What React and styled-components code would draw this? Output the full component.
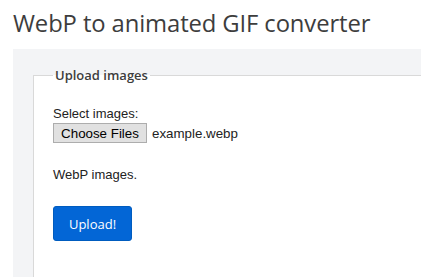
import React from "react";
import styled, { createGlobalStyle } from "styled-components";

const Global = createGlobalStyle`
  html, body { margin: 0; padding: 0; background: #fff; overflow: hidden; }
  body { font-family: "Liberation Sans", Arial, sans-serif; font-size: 13px; color: #222; }
`;

const Page = styled.div`
  box-sizing: border-box;
  height: 277px;
  padding: 0 0 0 13px;
  display: flex;
  flex-direction: column;
  overflow: hidden;
`;

const Title = styled.h1`
  margin: 0;
  padding-top: 6px;
  height: 43px;
  font-family: "Open Sans", "Noto Sans", sans-serif;
  font-weight: 400;
  font-size: 23.8px;
  line-height: 34px;
  color: #3d3d3d;
  letter-spacing: -0.1px;
  white-space: nowrap;
`;

const Panel = styled.section`
  flex: 1;
  min-height: 0;
  display: flex;
  flex-direction: column;
  background: #f3f4f6;
  padding: 17px 0 0 20px;
`;

const Fieldset = styled.fieldset`
  flex: 1;
  margin: 0;
  min-width: 0;
  background: #fff;
  border: 1px solid #d9d9d9;
  border-right: none;
  border-bottom: none;
  padding: 22px 0 0 19px;
`;

const Legend = styled.legend`
  padding: 0 2px;
  font-family: "Open Sans", "Noto Sans", sans-serif;
  font-weight: 600;
  font-size: 13px;
  line-height: 18px;
  color: #3d3d3d;
`;

const Label = styled.div`
  line-height: 15px;
  color: #222;
`;

const FileRow = styled.div`
  display: flex;
  align-items: center;
  gap: 5px;
  margin-top: 2px;
  height: 20px;
`;

const FileButton = styled.button`
  box-sizing: border-box;
  height: 20px;
  width: 94px;
  padding: 0;
  background: #e1e1e1;
  border: 1px solid #adadad;
  border-radius: 0;
  font-family: "Liberation Sans", Arial, sans-serif;
  font-size: 13.33px;
  color: #000;
`;

const FileName = styled.span`
  font-size: 13.33px;
  color: #222;
`;

const Hint = styled.p`
  margin: 24px 0 0;
  line-height: 15px;
  color: #222;
`;

const Submit = styled.button`
  box-sizing: border-box;
  display: block;
  margin-top: 24px;
  width: 79px;
  height: 35px;
  background: #0366d6;
  border: 1px solid #005cbf;
  border-radius: 3px;
  color: #fff;
  font-family: "Open Sans", "Noto Sans", sans-serif;
  font-size: 13px;
  padding: 0;
`;

export default function App() {
  return (
    <>
      <Global />
      <Page>
        <Title>WebP to animated GIF converter</Title>
        <Panel>
          <Fieldset>
            <Legend>Upload images</Legend>
            <Label>Select images:</Label>
            <FileRow>
              <FileButton type="button">Choose Files</FileButton>
              <FileName>example.webp</FileName>
            </FileRow>
            <Hint>WebP images.</Hint>
            <Submit type="button">Upload!</Submit>
          </Fieldset>
        </Panel>
      </Page>
    </>
  );
}
